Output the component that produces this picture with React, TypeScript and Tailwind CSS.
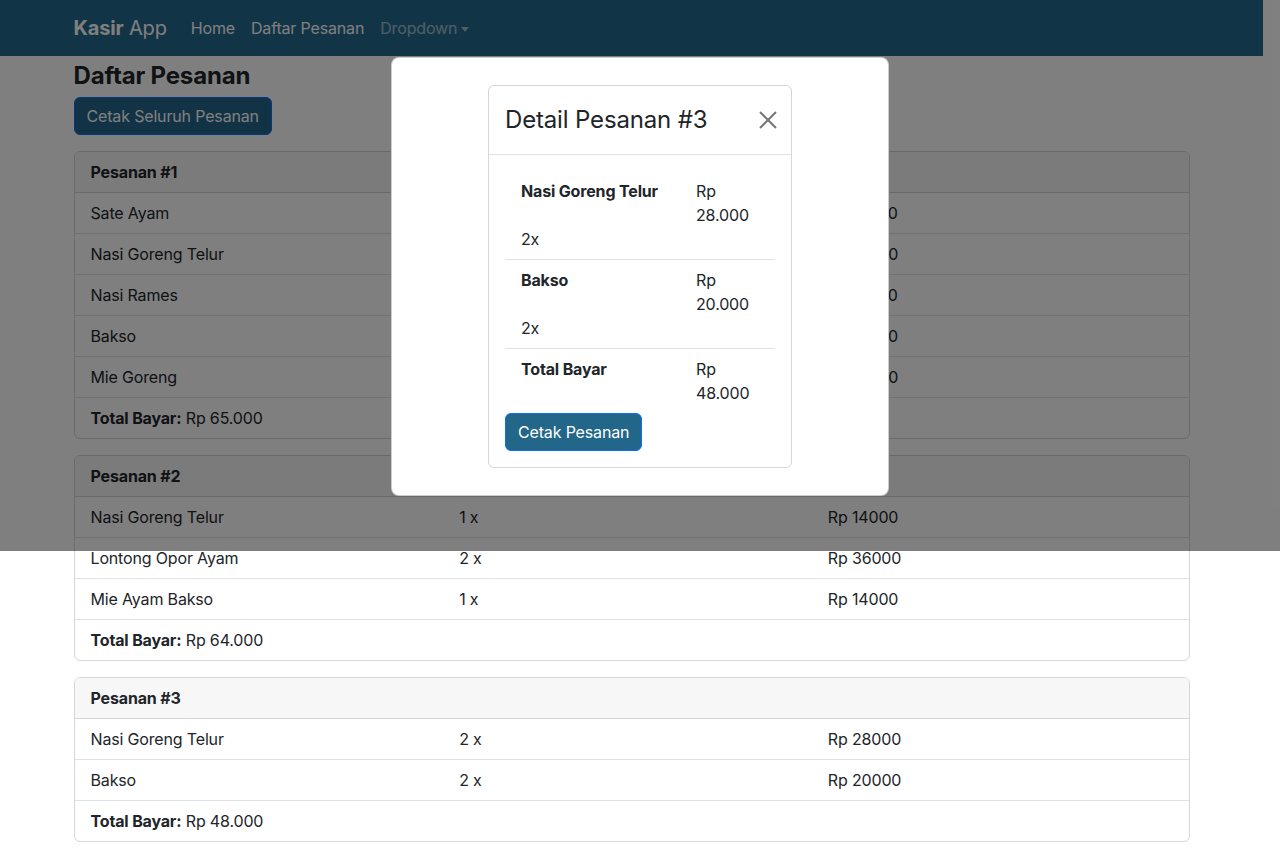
import React from "react";

type Item = { name: string; qty: number; price: number };
type Order = { id: number; items: Item[]; total: string };

const orders: Order[] = [
  {
    id: 1,
    items: [
      { name: "Sate Ayam", qty: 1, price: 15000 },
      { name: "Nasi Goreng Telur", qty: 1, price: 14000 },
      { name: "Nasi Rames", qty: 1, price: 12000 },
      { name: "Bakso", qty: 1, price: 10000 },
      { name: "Mie Goreng", qty: 1, price: 14000 },
    ],
    total: "Rp 65.000",
  },
  {
    id: 2,
    items: [
      { name: "Nasi Goreng Telur", qty: 1, price: 14000 },
      { name: "Lontong Opor Ayam", qty: 2, price: 36000 },
      { name: "Mie Ayam Bakso", qty: 1, price: 14000 },
    ],
    total: "Rp 64.000",
  },
  {
    id: 3,
    items: [
      { name: "Nasi Goreng Telur", qty: 2, price: 28000 },
      { name: "Bakso", qty: 2, price: 20000 },
    ],
    total: "Rp 48.000",
  },
];

const detail = [
  { name: "Nasi Goreng Telur", price: "28.000", qty: "2x" },
  { name: "Bakso", price: "20.000", qty: "2x" },
];

const OrderCard = ({ order }: { order: Order }) => (
  <div className="mb-4 overflow-hidden rounded-md border border-[#d6d6d6]">
    <div className="border-b border-[#d6d6d6] bg-[#f7f7f7] px-4 py-2 font-bold leading-6">
      Pesanan #{order.id}
    </div>
    {order.items.map((item, i) => (
      <div key={i} className="border-b border-[#dee2e6] px-4 py-2 leading-6">
        <div className="-mx-3 grid grid-cols-3">
          <div className="px-3">{item.name}</div>
          <div className="px-3">{item.qty} x</div>
          <div className="px-3">Rp {item.price}</div>
        </div>
      </div>
    ))}
    <div className="px-4 py-2 leading-6">
      <span className="font-bold">Total Bayar:</span> {order.total}
    </div>
  </div>
);

const App = () => {
  return (
    <div
      className="relative w-full text-base tracking-[-0.01em] text-[#212529]"
      style={{ fontFamily: "Inter, 'Noto Sans', sans-serif" }}
    >
      <div className="w-[1263px] bg-white pb-4">
        <nav className="h-14 bg-[#24698f]">
          <div className="mx-auto flex h-full w-[1116px] items-center">
            <span className="mr-4 text-xl leading-7 text-white">
              <span className="font-bold">Kasir</span> App
            </span>
            <a className="px-2 text-white">Home</a>
            <a className="px-2 text-white">Daftar Pesanan</a>
            <a className="flex items-center px-2 text-white/55">
              Dropdown
              <span className="ml-1 mt-0.5 border-x-[4px] border-t-[5px] border-x-transparent border-t-white/55" />
            </a>
          </div>
        </nav>
        <main className="mx-auto w-[1116px] pt-[6px]">
          <h3 className="mb-[6px] text-2xl font-bold leading-[1.2]">Daftar Pesanan</h3>
          <button className="mb-4 rounded-md border border-[#0d6efd] bg-[#22668a] px-3 py-1.5 leading-6 text-white">
            Cetak Seluruh Pesanan
          </button>
          {orders.map((o) => (
            <OrderCard key={o.id} order={o} />
          ))}
        </main>
      </div>

      <div className="absolute left-0 top-0 h-[551px] w-full bg-black/50">
        <div className="mx-auto mt-[57px] w-[498px] rounded-lg border border-black/20 bg-white py-[27px]">
          <div className="mx-auto w-[304px] rounded-md border border-[#d6d6d6]">
            <div className="flex items-center border-b border-[#dee2e6] px-4 py-4">
              <h5 className="text-2xl font-normal leading-9">Detail Pesanan #3</h5>
              <button className="ml-auto mr-[-2px] text-[#777]">
                <svg width="18" height="18" viewBox="0 0 18 18" fill="none" stroke="currentColor" strokeWidth="2">
                  <path d="M1 1L17 17M17 1L1 17" />
                </svg>
              </button>
            </div>
            <div className="p-4">
              {detail.map((d, i) => (
                <div key={i} className="border-b border-[#dee2e6] px-4 py-2 leading-6">
                  <div className="flex">
                    <div className="w-[175px] font-bold">{d.name}</div>
                    <div className="flex-1">Rp {d.price}</div>
                  </div>
                  <div>{d.qty}</div>
                </div>
              ))}
              <div className="px-4 py-2 leading-6">
                <div className="flex">
                  <div className="w-[175px] font-bold">Total Bayar</div>
                  <div className="flex-1">Rp 48.000</div>
                </div>
              </div>
              <button className="rounded-md border border-[#0d6efd] bg-[#22668a] px-3 py-1.5 leading-6 text-white">
                Cetak Pesanan
              </button>
            </div>
          </div>
        </div>
      </div>
    </div>
  );
};

export default App;
